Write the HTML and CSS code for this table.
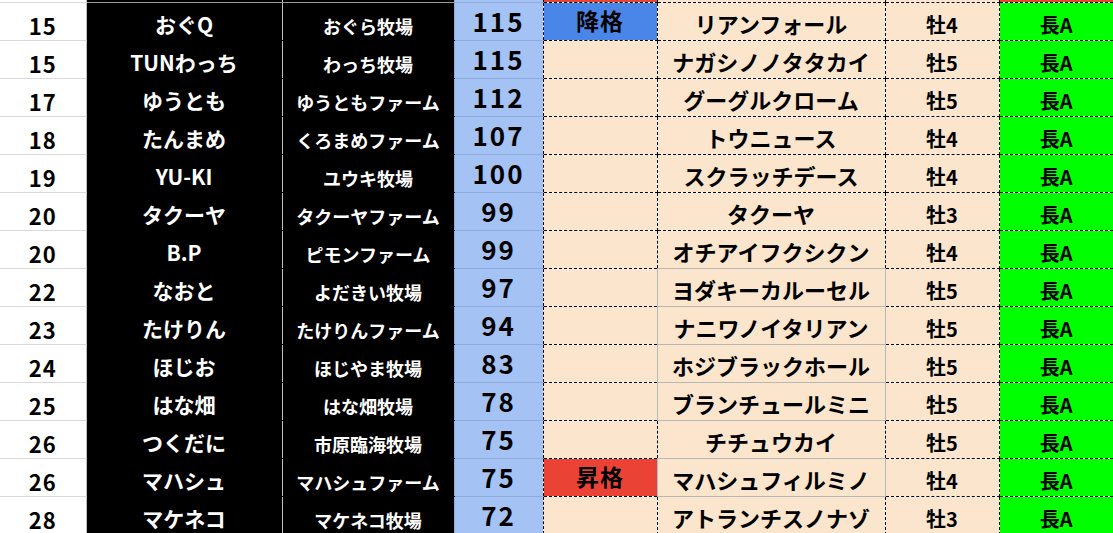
FILE: index.html
```html
<!DOCTYPE html>
<html lang="ja">
<head>
<meta charset="utf-8">
<title>ランキング</title>
<link rel="stylesheet" href="styles.css">
</head>
<body>
<table class="sheet">
  <colgroup>
    <col class="w-rank"><col class="w-name"><col class="w-farm"><col class="w-pts">
    <col class="w-tag"><col class="w-horse"><col class="w-sex"><col class="w-grade">
  </colgroup>
  <tbody>
    <tr class="ghost">
      <td class="c-rank"></td><td class="c-name"></td><td class="c-farm"></td><td class="c-pts"></td>
      <td class="c-tag up"></td><td class="c-horse"></td><td class="c-sex"></td><td class="c-grade red"></td>
    </tr>
    <tr><td class="c-rank">15</td><td class="c-name">おぐQ</td><td class="c-farm">おぐら牧場</td><td class="c-pts">115</td><td class="c-tag down">降格</td><td class="c-horse">リアンフォール</td><td class="c-sex">牡4</td><td class="c-grade">長A</td></tr>
    <tr><td class="c-rank">15</td><td class="c-name">TUNわっち</td><td class="c-farm">わっち牧場</td><td class="c-pts">115</td><td class="c-tag"></td><td class="c-horse">ナガシノノタタカイ</td><td class="c-sex">牡5</td><td class="c-grade">長A</td></tr>
    <tr><td class="c-rank">17</td><td class="c-name">ゆうとも</td><td class="c-farm">ゆうともファーム</td><td class="c-pts">112</td><td class="c-tag"></td><td class="c-horse">グーグルクローム</td><td class="c-sex">牡5</td><td class="c-grade">長A</td></tr>
    <tr><td class="c-rank">18</td><td class="c-name">たんまめ</td><td class="c-farm">くろまめファーム</td><td class="c-pts">107</td><td class="c-tag"></td><td class="c-horse">トウニュース</td><td class="c-sex">牡4</td><td class="c-grade">長A</td></tr>
    <tr><td class="c-rank">19</td><td class="c-name">YU-KI</td><td class="c-farm">ユウキ牧場</td><td class="c-pts">100</td><td class="c-tag"></td><td class="c-horse">スクラッチデース</td><td class="c-sex">牡4</td><td class="c-grade">長A</td></tr>
    <tr><td class="c-rank">20</td><td class="c-name">タクーヤ</td><td class="c-farm">タクーヤファーム</td><td class="c-pts">99</td><td class="c-tag"></td><td class="c-horse">タクーヤ</td><td class="c-sex">牡3</td><td class="c-grade">長A</td></tr>
    <tr><td class="c-rank">20</td><td class="c-name">B.P</td><td class="c-farm">ピモンファーム</td><td class="c-pts">99</td><td class="c-tag"></td><td class="c-horse">オチアイフクシクン</td><td class="c-sex">牡4</td><td class="c-grade">長A</td></tr>
    <tr><td class="c-rank">22</td><td class="c-name">なおと</td><td class="c-farm">よだきい牧場</td><td class="c-pts">97</td><td class="c-tag"></td><td class="c-horse plain">ヨダキーカルーセル</td><td class="c-sex">牡5</td><td class="c-grade">長A</td></tr>
    <tr><td class="c-rank">23</td><td class="c-name">たけりん</td><td class="c-farm">たけりんファーム</td><td class="c-pts">94</td><td class="c-tag"></td><td class="c-horse plain">ナニワノイタリアン</td><td class="c-sex">牡5</td><td class="c-grade">長A</td></tr>
    <tr><td class="c-rank">24</td><td class="c-name">ほじお</td><td class="c-farm">ほじやま牧場</td><td class="c-pts">83</td><td class="c-tag"></td><td class="c-horse plain">ホジブラックホール</td><td class="c-sex">牡5</td><td class="c-grade">長A</td></tr>
    <tr><td class="c-rank">25</td><td class="c-name">はな畑</td><td class="c-farm">はな畑牧場</td><td class="c-pts">78</td><td class="c-tag"></td><td class="c-horse plain">ブランチュールミニ</td><td class="c-sex">牡5</td><td class="c-grade">長A</td></tr>
    <tr><td class="c-rank">26</td><td class="c-name">つくだに</td><td class="c-farm">市原臨海牧場</td><td class="c-pts">75</td><td class="c-tag"></td><td class="c-horse">チチュウカイ</td><td class="c-sex">牡5</td><td class="c-grade">長A</td></tr>
    <tr><td class="c-rank">26</td><td class="c-name">マハシュ</td><td class="c-farm">マハシュファーム</td><td class="c-pts">75</td><td class="c-tag up">昇格</td><td class="c-horse plain">マハシュフィルミノ</td><td class="c-sex">牡4</td><td class="c-grade">長A</td></tr>
    <tr><td class="c-rank">28</td><td class="c-name">マケネコ</td><td class="c-farm">マケネコ牧場</td><td class="c-pts">72</td><td class="c-tag"></td><td class="c-horse">アトランチスノナゾ</td><td class="c-sex">牡3</td><td class="c-grade">長A</td></tr>
  </tbody>
</table>
</body>
</html>
```

FILE: styles.css
```css
html, body {
  margin: 0;
  padding: 0;
  background: #ffffff;
  overflow: hidden;
}

.sheet {
  border-collapse: collapse;
  table-layout: fixed;
  width: 1113px;
  font-family: "Noto Sans CJK JP", "Noto Sans", sans-serif;
  font-weight: bold;
  color: #000;
}

.w-rank { width: 86px; }
.w-name { width: 196px; }
.w-farm { width: 172px; }
.w-pts { width: 89px; }
.w-tag { width: 114px; }
.w-horse { width: 228px; }
.w-sex { width: 114px; }
.w-grade { width: 114px; }

.sheet tr { height: 38px; }

.sheet td {
  padding: 0;
  text-align: center;
  vertical-align: middle;
  line-height: 1;
  white-space: nowrap;
  overflow: hidden;
}

.sheet .c-rank {
  background: #fff;
  font-size: 22px;
  letter-spacing: 1px;
  padding-top: 8px;
  border-right: 1px solid #bfbfbf;
  border-bottom: 1px solid #d9d9d9;
}

.sheet .c-name {
  background: #000;
  color: #fff;
  font-size: 21px;
  padding-top: 7px;
  border-right: 1px solid #bfbfbf;
  border-bottom: 1px solid #000;
}

.sheet .c-farm {
  background: #000;
  color: #fff;
  font-size: 18px;
  padding-top: 9px;
  border-bottom: 1px solid #000;
}

.sheet .c-pts {
  background: #a4c2f4;
  font-size: 26px;
  letter-spacing: 2px;
  border-left: 1px solid #8eaadb;
  border-bottom: 1px solid #8eaadb;
  border-right: 1px dashed #000;
}

.sheet .c-tag {
  background: #fce5cd;
  font-size: 23px;
  letter-spacing: 1px;
  padding-bottom: 2px;
  border-right: 1px dashed #000;
  border-bottom: 1px dashed #000;
}

.sheet .c-tag.down { background: #4a86e8; }
.sheet .c-tag.up { background: #ea4335; }

.sheet .c-horse {
  background: #fce5cd;
  font-size: 22px;
  padding-top: 3px;
  border-right: 1px dashed #000;
  border-bottom: 1px dashed #000;
}

.sheet .c-horse.plain {
  border: 1px solid #b7b7b7;
}

.sheet .c-sex {
  background: #fce5cd;
  font-size: 20px;
  padding-top: 8px;
  border-right: 1px dashed #000;
  border-bottom: 1px dashed #000;
}

.sheet .c-grade {
  background: #00ff00;
  font-size: 20px;
  padding-top: 8px;
  border-bottom: 1px dashed #000;
}

.sheet .c-grade.red { background: #ea4335; }

/* partial row peeking in at the top of the view */
.sheet tr.ghost { height: 2px; }
.sheet tr.ghost td {
  padding: 0;
  font-size: 0;
  line-height: 0;
  height: 1px;
}
.sheet tr.ghost .c-name,
.sheet tr.ghost .c-farm { border-bottom-color: #9a9a9a; }
```
